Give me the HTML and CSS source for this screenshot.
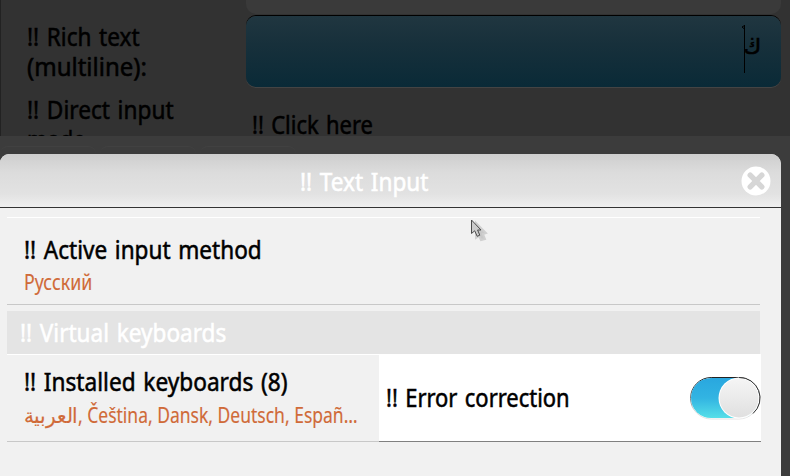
FILE: index.html
```
<!DOCTYPE html>
<html lang="en">
<head>
<meta charset="utf-8">
<title>Text Input</title>
<link rel="stylesheet" href="styles.css">
</head>
<body>
<main class="screen">
  <section class="backdrop">
    <div class="labels">
      <p class="label rich"><span class="t t-rich">!! Rich text</span><br><span class="t t-multi">(multiline):</span></p>
      <p class="label direct"><span class="t t-direct">!! Direct input</span><br><span class="t t-mode">mode</span></p>
    </div>
    <div class="fields">
      <div class="field-prev"></div>
      <div class="field-rich" dir="rtl"><span class="arabic">ڬ</span><svg class="caret" width="4" height="49" viewBox="0 0 4 49"><path d="M3.5 0V48M3.5 .5L1 2L3.5 4" fill="none" stroke="#000"/></svg></div>
      <p class="click"><span class="t t-click">!! Click here</span></p>
    </div>
  </section>
  <div class="strip"><i></i><i></i><i></i></div>
  <section class="dialog">
    <header class="bar">
      <h1 class="title"><span class="t t-title">!! Text Input</span></h1>
      <svg class="close" width="30" height="30" viewBox="0 0 30 30"><circle cx="15" cy="15" r="14.5" fill="#fff"/><path d="M9.2 9.2L20.8 20.8M20.8 9.2L9.2 20.8" stroke="#d6d6d6" stroke-width="5.4" stroke-linecap="round"/></svg>
    </header>
    <div class="content">
      <div class="row active">
        <div class="main"><span class="t t-active">!! Active input method</span></div>
        <div class="sub"><span class="t t-rus">Русский</span></div>
      </div>
      <h2 class="group"><span class="t t-virtual">!! Virtual keyboards</span></h2>
      <div class="pair">
        <div class="row installed">
          <div class="main"><span class="t t-inst">!! Installed keyboards (8)</span></div>
          <div class="sub"><span class="t t-ar">العربية</span><span class="t t-list">, Čeština, Dansk, Deutsch, Españ…</span></div>
        </div>
        <div class="correction">
          <span class="t t-error">!! Error correction</span>
          <svg class="toggle" width="72" height="44" viewBox="0 0 72 44">
            <defs>
              <linearGradient id="track" x2="0" y2="1"><stop offset="0" stop-color="#29a7df"/><stop offset=".5" stop-color="#32b4e2"/><stop offset="1" stop-color="#56dfe8"/></linearGradient>
              <linearGradient id="rim" x2="0" y2="1"><stop offset="0" stop-color="#222"/><stop offset=".5" stop-color="#777"/><stop offset=".8" stop-color="#ddd"/><stop offset="1" stop-color="#e4e4e4"/></linearGradient>
              <linearGradient id="knob" x2="0" y2="1"><stop offset="0" stop-color="#f5f5f5"/><stop offset="1" stop-color="#e0e0e0"/></linearGradient>
            </defs>
            <rect x="1.5" y="1.5" width="69" height="41.5" rx="20.7" fill="#fff" stroke="url(#rim)"/>
            <rect x="2" y="2" width="68" height="40" rx="20" fill="url(#track)"/>
            <circle cx="50" cy="22" r="20.5" fill="#fff"/>
            <circle cx="50" cy="22" r="19.5" fill="url(#knob)"/>
            <path d="M50 1.5A20.5 20.5 0 0 1 64 37.5" fill="none" stroke="#333"/>
          </svg>
        </div>
      </div>
    </div>
  </section>
  <svg class="pointer" width="20" height="26" viewBox="0 0 20 26"><path d="M6 4L16 14L13 15L15 20L11 21L9 17L6 19Z" fill="#c8c8c8" stroke="#d0d0d0" stroke-width="2"/><path d="M1.5 1V14.5L4.7 11.8L7.2 17.3L9.8 16.2L7.6 11H11Z" fill="#ccc" stroke="#4c4c4c"/></svg>
</main>
</body>
</html>
```
FILE: styles.css
```
* { box-sizing: border-box; }
body { margin: 0; background: #3c3c3c; }
p, h1, h2 { margin: 0; font: inherit; }
.screen {
  position: relative; width: 790px; height: 476px; overflow: hidden;
  font: 25.6px/30px "Noto Sans", sans-serif; color: #000;
}
.t { display: inline-block; white-space: pre; word-spacing: 2px; transform-origin: 0 50%; transform: scaleX(var(--s, 1)); -webkit-text-stroke: .55px currentColor; }
.t-rich { --s: .882; }
.t-multi { --s: .938; }
.t-direct { --s: .885; }
.t-mode { --s: .84; }
.t-click { --s: .857; }
.t-title { --s: .883; }
.t-active { --s: .882; }
.t-rus { --s: .848; }
.t-virtual { --s: .882; }
.t-inst { --s: .885; }
.t-ar { --s: .95; }
.t-list { --s: .833; margin-left: -3px; }
.t-error { --s: .857; }
.backdrop { display: grid; grid-template-columns: 246px 534px; height: 136px; overflow: hidden; background: #323232; border-left: 1px solid #222; }
.labels { padding: 22px 0 0 26px; }
.direct { margin-top: 13px; }
.fields { margin-left: -1px; }
.field-prev { height: 14px; margin-bottom: 2px; background: #3a3a3a; border-radius: 0 0 10px 10px; }
.field-rich { display: flex; height: 71px; padding: 9px 20px 0 0; border-radius: 10px; background: linear-gradient(#203640, #17303b 40%, #0a2a37); box-shadow: 0 -1px 0 #000, 0 1px 0 #444; }
.arabic { font: 21px/45px "DejaVu Sans", sans-serif; -webkit-text-stroke: .7px #000; }
.caret { margin-right: -1px; }
.click { padding: 23px 0 0 6px; }
.strip { display: flex; gap: 4px; height: 18px; padding-top: 10px; }
.strip i { width: 96px; border-top: 1px solid #414141; border-radius: 12px 12px 0 0; }
.dialog { width: 781px; height: 322px; border-radius: 9px 10px 0 0; overflow: hidden; background: #f1f1f1; }
.bar { display: flex; height: 54px; justify-content: space-between; padding: 12px 10px 0 300px; border-bottom: 1px solid #333; background: linear-gradient(#cecece, #dcdcdc 35%, #e2e2e2 75%, #efefef); color: #fff; }
.title { padding-top: 1px; }
.content { padding: 9px 21px 0 7px; }
.row { padding-left: 17px; border-bottom: 1px solid #c8c8c8; }
.active { height: 88px; padding-top: 17px; border-top: 1px solid #fff; }
.sub { font-size: 21px; line-height: 26px; color: #d06a38; }
.sub .t { word-spacing: 0; -webkit-text-stroke-width: .15px; }
.active .sub { margin-top: 4px; }
.group { height: 43px; margin-top: 6px; padding: 7px 0 0 13px; background: #e4e4e4; color: #fff; }
.pair { display: grid; grid-template-columns: 372px 382px; height: 88px; }
.installed { padding-top: 12px; border-top: 1px solid #fff; }
.installed .sub { display: flex; margin-top: 5px; }
.correction { display: flex; justify-content: space-between; padding: 22px 0 0 7px; background: #fff; border-bottom: 1px solid #808080; }
.correction .t { margin-top: 7px; }
.pointer { position: absolute; left: 470px; top: 219px; }
```
